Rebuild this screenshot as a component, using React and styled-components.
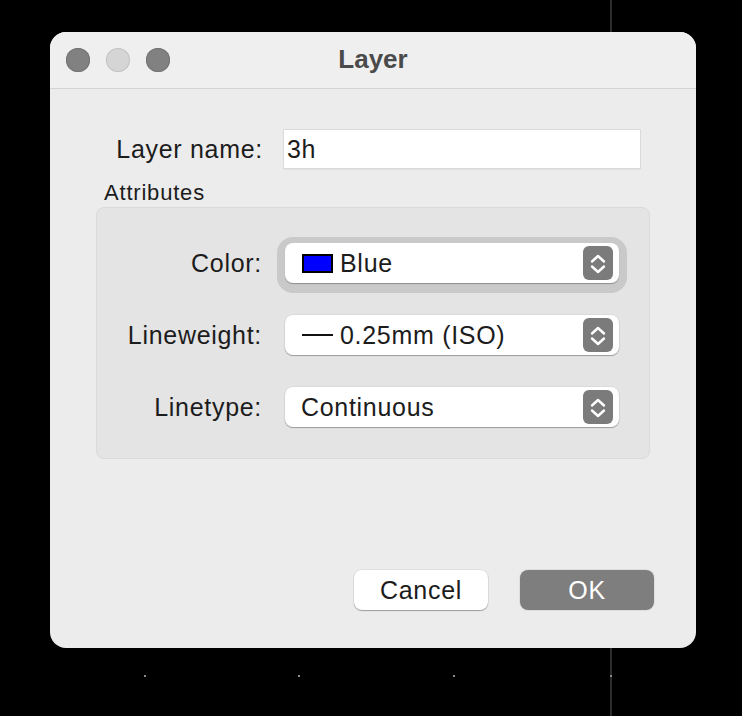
import React from "react";
import styled, { createGlobalStyle } from "styled-components";

const GlobalStyle = createGlobalStyle`
  html, body {
    margin: 0;
    padding: 0;
    background: #000;
  }
  body {
    font-family: "Liberation Sans", Arial, sans-serif;
    width: 742px;
    height: 716px;
    overflow: hidden;
  }
`;

const Canvas = styled.div`
  position: relative;
  width: 742px;
  height: 716px;
  background: #000;
  padding: 32px 0 0 50px;
  box-sizing: border-box;
`;

const AxisLine = styled.div`
  position: absolute;
  left: 610px;
  top: 0;
  width: 2px;
  height: 716px;
  background: #2c2c2c;
`;

const GridDot = styled.div`
  position: absolute;
  top: 675px;
  width: 2px;
  height: 2px;
  background: #8a8a8a;
`;

const Dialog = styled.div`
  position: relative;
  width: 646px;
  height: 616px;
  background: #ececec;
  border-radius: 16px;
  overflow: hidden;
  display: flex;
  flex-direction: column;
`;

const TitleBar = styled.div`
  position: relative;
  height: 56px;
  flex-shrink: 0;
  background: #efefef;
  border-bottom: 1px solid #d3d3d3;
  display: flex;
  align-items: center;
  justify-content: center;
`;

const Lights = styled.div`
  position: absolute;
  left: 16px;
  top: 16px;
  display: flex;
  gap: 16px;
`;

const Light = styled.span`
  width: 24px;
  height: 24px;
  border-radius: 50%;
  background: ${({ $dim }) => ($dim ? "#d5d5d5" : "#818181")};
  box-shadow: inset 0 0 0 1px ${({ $dim }) => ($dim ? "#c4c4c4" : "#747474")};
`;

const Title = styled.div`
  font-weight: 700;
  font-size: 26px;
  color: #4a4a4a;
  margin-top: -2px;
`;

const Content = styled.div`
  flex: 1;
  display: flex;
  flex-direction: column;
  padding: 41px 42px 38px 46px;
`;

const NameRow = styled.div`
  display: grid;
  grid-template-columns: 167px 356px;
  column-gap: 21px;
  align-items: center;
`;

const Label = styled.label`
  font-size: 25px;
  letter-spacing: 0.7px;
  color: #1c1c1c;
  text-align: right;
  white-space: nowrap;
`;

const TextField = styled.div`
  height: 38px;
  background: #fff;
  box-shadow: 0 0 0 1px #dadada, 0 1px 1px rgba(0, 0, 0, 0.25);
  box-sizing: border-box;
  padding-left: 3px;
  display: flex;
  align-items: center;
  font-size: 25px;
  letter-spacing: 0.7px;
  color: #1c1c1c;
`;

const GroupTitle = styled.div`
  margin: 13px 0 2px 8px;
  font-size: 22px;
  letter-spacing: 0.8px;
  line-height: 24px;
  color: #1c1c1c;
`;

const Group = styled.div`
  width: 554px;
  height: 252px;
  box-sizing: border-box;
  background: #e4e4e4;
  border: 1px solid #dadada;
  border-radius: 8px;
  padding-top: 35px;
  display: grid;
  grid-template-columns: 165px 334px;
  grid-auto-rows: 40px;
  column-gap: 23px;
  row-gap: 32px;
  align-items: center;
`;

const Popup = styled.div`
  position: relative;
  height: 40px;
  box-sizing: border-box;
  background: #fff;
  border-radius: 8px;
  padding-left: 16px;
  display: flex;
  align-items: center;
  gap: 7px;
  font-size: 25px;
  letter-spacing: 0.7px;
  color: #1c1c1c;
  box-shadow: ${({ $focused }) =>
    $focused
      ? "0 1px 1px rgba(0,0,0,0.3), 0 2px 0 8px #c9c9c9"
      : "0 0 0 1px rgba(0,0,0,0.04), 0 1px 1px rgba(0,0,0,0.3)"};
`;

const Swatch = styled.span`
  width: 31px;
  height: 19px;
  box-sizing: border-box;
  margin-left: 1px;
  background: ${({ $color }) => $color};
  border: 2px solid #000;
`;

const Stroke = styled.span`
  width: 31px;
  height: 2px;
  margin-left: 1px;
  background: #111;
`;

const Stepper = styled.svg`
  position: absolute;
  right: 6px;
  top: 3px;
`;

const Buttons = styled.div`
  margin-top: auto;
  display: flex;
  justify-content: flex-end;
  gap: 32px;
`;

const Button = styled.button`
  width: 134px;
  height: 40px;
  border: none;
  border-radius: 8px;
  font-family: inherit;
  font-size: 25px;
  letter-spacing: 0.7px;
  padding: 0;
  color: ${({ $primary }) => ($primary ? "#fff" : "#1c1c1c")};
  background: ${({ $primary }) => ($primary ? "#7e7e7e" : "#fff")};
  box-shadow: ${({ $primary }) =>
    $primary
      ? "0 0 0 1px rgba(0,0,0,0.06)"
      : "0 0 0 1px rgba(0,0,0,0.05), 0 1px 1px rgba(0,0,0,0.3)"};
`;

const StepperIcon = () => (
  <Stepper width="30" height="34" viewBox="0 0 30 34">
    <rect x="0" y="0" width="30" height="34" rx="6" fill="#7b7b7b" />
    <path d="M9 15.5 L15 10 L21 15.5" fill="none" stroke="#fff" strokeWidth="2.4" strokeLinecap="round" strokeLinejoin="round" />
    <path d="M9 20.5 L15 26 L21 20.5" fill="none" stroke="#fff" strokeWidth="2.4" strokeLinecap="round" strokeLinejoin="round" />
  </Stepper>
);

const attributes = [
  { label: "Color:", value: "Blue", swatch: "#0000ff", focused: true },
  { label: "Lineweight:", value: "0.25mm (ISO)", stroke: true },
  { label: "Linetype:", value: "Continuous" },
];

export default function App() {
  return (
    <>
      <GlobalStyle />
      <Canvas>
        <AxisLine />
        {[144, 298, 453, 610].map((x) => (
          <GridDot key={x} style={{ left: x }} />
        ))}
        <Dialog>
          <TitleBar>
            <Lights>
              <Light />
              <Light $dim />
              <Light />
            </Lights>
            <Title>Layer</Title>
          </TitleBar>
          <Content>
            <NameRow>
              <Label>Layer name:</Label>
              <TextField>3h</TextField>
            </NameRow>
            <GroupTitle>Attributes</GroupTitle>
            <Group>
              {attributes.map((a) => (
                <React.Fragment key={a.label}>
                  <Label>{a.label}</Label>
                  <Popup $focused={a.focused}>
                    {a.swatch && <Swatch $color={a.swatch} />}
                    {a.stroke && <Stroke />}
                    <span>{a.value}</span>
                    <StepperIcon />
                  </Popup>
                </React.Fragment>
              ))}
            </Group>
            <Buttons>
              <Button>Cancel</Button>
              <Button $primary>OK</Button>
            </Buttons>
          </Content>
        </Dialog>
      </Canvas>
    </>
  );
}
